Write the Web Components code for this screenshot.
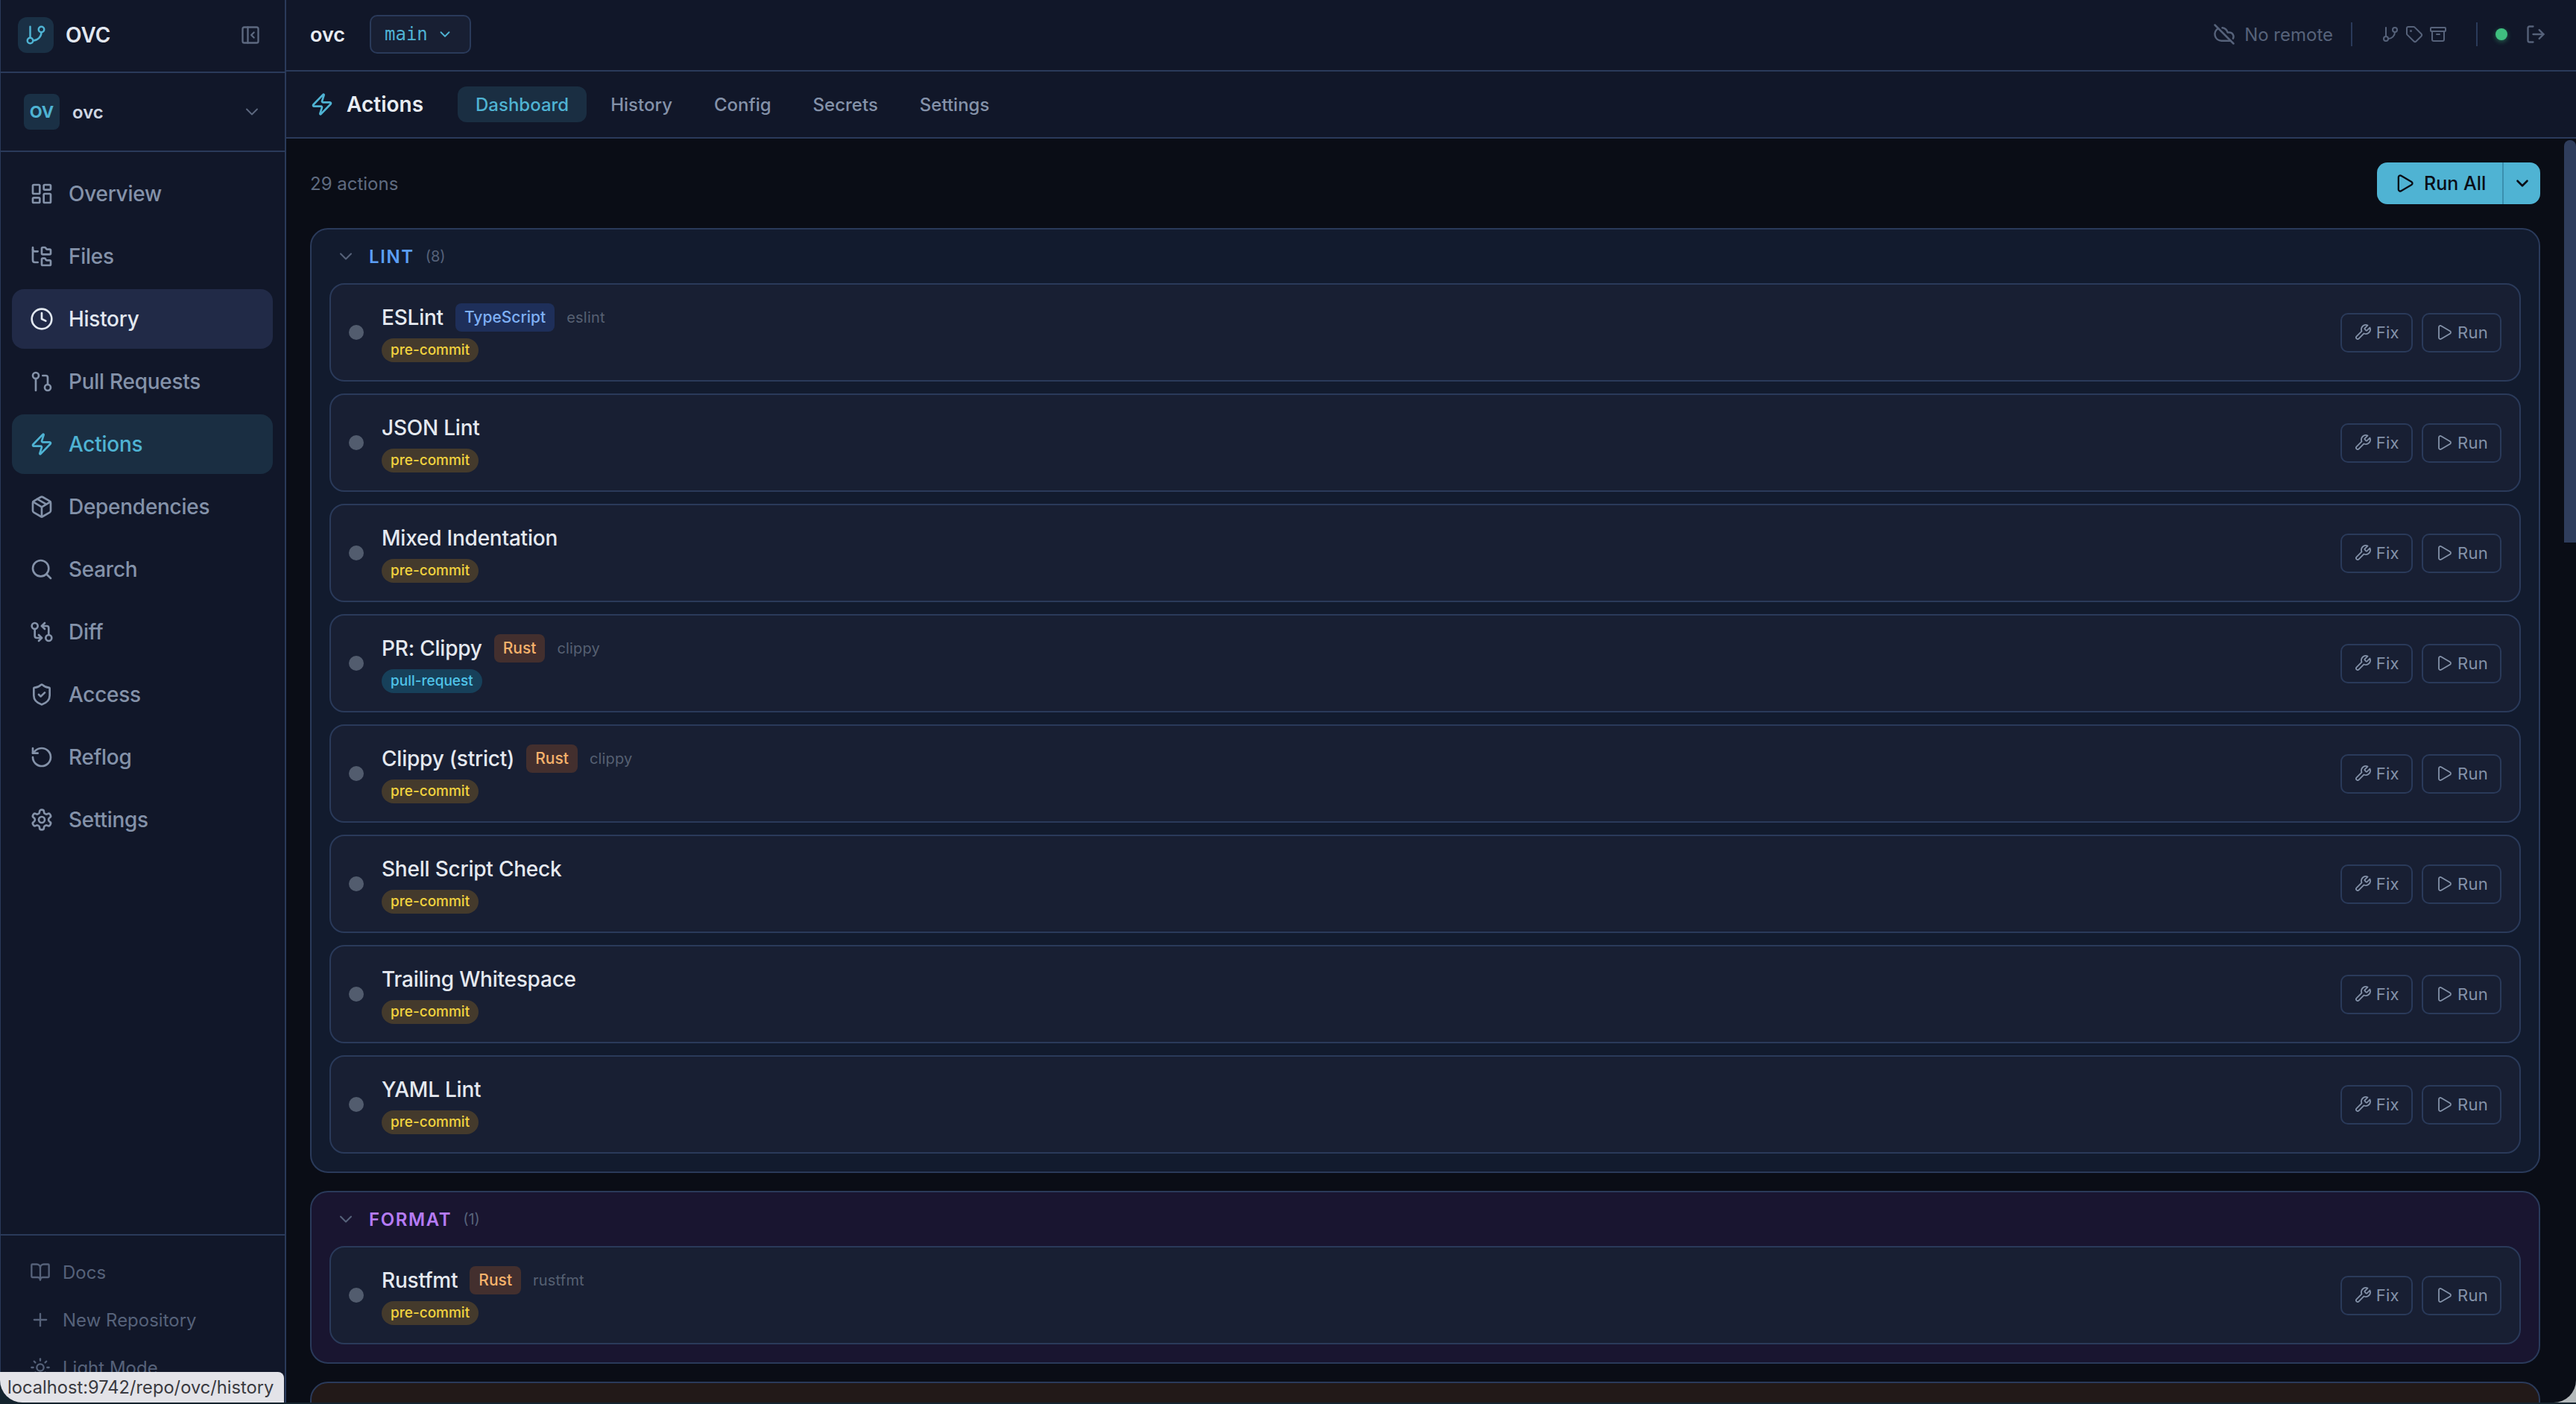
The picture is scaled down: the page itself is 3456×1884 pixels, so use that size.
<!DOCTYPE html>
<html>
<head>
<meta charset="utf-8">
<title>OVC</title>
<style>
  html, body { margin: 0; height: 100%; }
  body { background: #15242e; overflow: hidden; font-family: Inter, "Noto Sans", sans-serif; position: relative; }
  .glare { position: absolute; right: 0; bottom: 2px; width: 34px; height: 34px; background: #b4b9bb; }
</style>
</head>
<body>
<div class="glare"></div>
<ovc-app></ovc-app>

<script>
const ICONS = {
  branch: '<line x1="6" x2="6" y1="3" y2="15"/><circle cx="18" cy="6" r="3"/><circle cx="6" cy="18" r="3"/><path d="M18 9a9 9 0 0 1-9 9"/>',
  panel: '<rect x="3" y="3" width="18" height="18" rx="2"/><path d="M9 3v18"/><path d="m16 15-3-3 3-3"/>',
  chevron: '<path d="m6 9 6 6 6-6"/>',
  dashboard: '<rect x="3" y="3" width="7" height="9" rx="1"/><rect x="14" y="3" width="7" height="5" rx="1"/><rect x="14" y="12" width="7" height="9" rx="1"/><rect x="3" y="16" width="7" height="5" rx="1"/>',
  tree: '<path d="M20 10a1 1 0 0 0 1-1V6a1 1 0 0 0-1-1h-2.5a1 1 0 0 1-.8-.4l-.9-1.2A1 1 0 0 0 15 3h-2a1 1 0 0 0-1 1v5a1 1 0 0 0 1 1Z"/><path d="M20 21a1 1 0 0 0 1-1v-3a1 1 0 0 0-1-1h-2.9a1 1 0 0 1-.88-.55l-.42-.85a1 1 0 0 0-.92-.6H13a1 1 0 0 0-1 1v5a1 1 0 0 0 1 1Z"/><path d="M3 5a2 2 0 0 0 2 2h3"/><path d="M3 3v13a2 2 0 0 0 2 2h3"/>',
  clock: '<circle cx="12" cy="12" r="10"/><path d="M12 6v6l4 2"/>',
  pull: '<circle cx="18" cy="18" r="3"/><circle cx="6" cy="6" r="3"/><path d="M13 6h3a2 2 0 0 1 2 2v7"/><line x1="6" x2="6" y1="9" y2="21"/>',
  zap: '<path d="M4 14a1 1 0 0 1-.78-1.63l9.9-10.2a.5.5 0 0 1 .86.46l-1.92 6.02A1 1 0 0 0 13 10h7a1 1 0 0 1 .78 1.63l-9.9 10.2a.5.5 0 0 1-.86-.46l1.92-6.02A1 1 0 0 0 11 14z"/>',
  box: '<path d="M11 21.73a2 2 0 0 0 2 0l7-4A2 2 0 0 0 21 16V8a2 2 0 0 0-1-1.73l-7-4a2 2 0 0 0-2 0l-7 4A2 2 0 0 0 3 8v8a2 2 0 0 0 1 1.73z"/><path d="M12 22V12"/><path d="m3.3 7 7.703 4.734a2 2 0 0 0 1.994 0L20.7 7"/><path d="m7.5 4.27 9 5.15"/>',
  search: '<path d="m21 21-4.34-4.34"/><circle cx="11" cy="11" r="8"/>',
  compare: '<circle cx="5" cy="6" r="3"/><path d="M12 6h5a2 2 0 0 1 2 2v7"/><path d="m15 9-3-3 3-3"/><circle cx="19" cy="18" r="3"/><path d="M12 18H7a2 2 0 0 1-2-2V9"/><path d="m9 15 3 3-3 3"/>',
  shield: '<path d="M20 13c0 5-3.5 7.5-7.66 8.95a1 1 0 0 1-.67-.01C7.5 20.5 4 18 4 13V6a1 1 0 0 1 1-1c2 0 4.5-1.2 6.24-2.72a1.17 1.17 0 0 1 1.52 0C14.51 3.81 17 5 19 5a1 1 0 0 1 1 1z"/><path d="m9 12 2 2 4-4"/>',
  undo: '<path d="M3 12a9 9 0 1 0 9-9 9.75 9.75 0 0 0-6.74 2.74L3 8"/><path d="M3 3v5h5"/>',
  gear: '<path d="M12.22 2h-.44a2 2 0 0 0-2 2v.18a2 2 0 0 1-1 1.73l-.43.25a2 2 0 0 1-2 0l-.15-.08a2 2 0 0 0-2.73.73l-.22.38a2 2 0 0 0 .73 2.73l.15.1a2 2 0 0 1 1 1.72v.51a2 2 0 0 1-1 1.74l-.15.09a2 2 0 0 0-.73 2.73l.22.38a2 2 0 0 0 2.73.73l.15-.08a2 2 0 0 1 2 0l.43.25a2 2 0 0 1 1 1.73V20a2 2 0 0 0 2 2h.44a2 2 0 0 0 2-2v-.18a2 2 0 0 1 1-1.73l.43-.25a2 2 0 0 1 2 0l.15.08a2 2 0 0 0 2.73-.73l.22-.39a2 2 0 0 0-.73-2.73l-.15-.08a2 2 0 0 1-1-1.74v-.5a2 2 0 0 1 1-1.74l.15-.09a2 2 0 0 0 .73-2.73l-.22-.38a2 2 0 0 0-2.73-.73l-.15.08a2 2 0 0 1-2 0l-.43-.25a2 2 0 0 1-1-1.73V4a2 2 0 0 0-2-2z"/><circle cx="12" cy="12" r="3"/>',
  book: '<path d="M12 7v14"/><path d="M3 18a1 1 0 0 1-1-1V4a1 1 0 0 1 1-1h5a4 4 0 0 1 4 4 4 4 0 0 1 4-4h5a1 1 0 0 1 1 1v13a1 1 0 0 1-1 1h-6a3 3 0 0 0-3 3 3 3 0 0 0-3-3z"/>',
  plus: '<path d="M5 12h14"/><path d="M12 5v14"/>',
  sun: '<circle cx="12" cy="12" r="4"/><path d="M12 2v2"/><path d="M12 20v2"/><path d="m4.93 4.93 1.41 1.41"/><path d="m17.66 17.66 1.41 1.41"/><path d="M2 12h2"/><path d="M20 12h2"/><path d="m6.34 17.66-1.41 1.41"/><path d="m19.07 4.93-1.41 1.41"/>',
  cloudoff: '<path d="m2 2 20 20"/><path d="M5.782 5.782A7 7 0 0 0 9 19h8.5a4.5 4.5 0 0 0 1.307-.193"/><path d="M21.532 16.5A4.5 4.5 0 0 0 17.5 10h-1.79A7.008 7.008 0 0 0 10 5.07"/>',
  tag: '<path d="M12.586 2.586A2 2 0 0 0 11.172 2H4a2 2 0 0 0-2 2v7.172a2 2 0 0 0 .586 1.414l8.704 8.704a2.426 2.426 0 0 0 3.42 0l6.58-6.58a2.426 2.426 0 0 0 0-3.42z"/><circle cx="7.5" cy="7.5" r=".5" fill="currentColor"/>',
  archive: '<rect x="2" y="3" width="20" height="5" rx="1"/><path d="M4 8v11a2 2 0 0 0 2 2h12a2 2 0 0 0 2-2V8"/><path d="M10 12h4"/>',
  logout: '<path d="m16 17 5-5-5-5"/><path d="M21 12H9"/><path d="M9 21H5a2 2 0 0 1-2-2V5a2 2 0 0 1 2-2h4"/>',
  wrench: '<path d="M14.7 6.3a1 1 0 0 0 0 1.4l1.6 1.6a1 1 0 0 0 1.4 0l3.77-3.77a6 6 0 0 1-7.94 7.94l-6.91 6.91a2.12 2.12 0 0 1-3-3l6.91-6.91a6 6 0 0 1 7.94-7.94l-3.76 3.76z"/>',
  play: '<path d="M5 5a2 2 0 0 1 3.008-1.728l11.997 6.998a2 2 0 0 1 .003 3.458l-12 7A2 2 0 0 1 5 19z"/>'
}

class OvcIcon extends HTMLElement {
  connectedCallback(){
    const size = this.getAttribute('size') || 24
    const root = this.attachShadow({mode: 'open'})
    root.innerHTML = `
      <style>
      :host{ display: inline-flex; flex: none; width: ${size}px; height: ${size}px; }
      svg{ width: 100%; height: 100%; }
      </style>
      <svg viewBox="0 0 24 24" fill="none" stroke="currentColor" stroke-width="${this.getAttribute('stroke') || 2}" stroke-linecap="round" stroke-linejoin="round">${ICONS[this.getAttribute('name')]}</svg>`
  }
}

class NavItem extends HTMLElement {
  connectedCallback(){
    const root = this.attachShadow({mode: 'open'})
    root.innerHTML = `
      <style>
      :host{
        display: flex;
        align-items: center;
        gap: 20px;
        height: 80px;
        padding-left: 24px;
        border-radius: 16px;
        font-size: 28px;
        font-weight: 500;
        letter-spacing: -.28px;
        color: #8492a9;
      }
      :host([current]){ background: #212a47; color: #e2e8f0; }
      :host([active]){ background: #1a2e42; color: #4fb3d3; }
      </style>
      <ovc-icon name="${this.getAttribute('icon')}" size="32"></ovc-icon>
      <slot></slot>`
  }
}

class FootItem extends HTMLElement {
  connectedCallback(){
    const root = this.attachShadow({mode: 'open'})
    root.innerHTML = `
      <style>
      :host{
        display: flex;
        align-items: center;
        gap: 16px;
        height: 64px;
        padding-left: 24px;
        font-size: 24px;
        font-weight: 400;
        color: #56627a;
      }
      </style>
      <ovc-icon name="${this.getAttribute('icon')}" size="28"></ovc-icon>
      <slot></slot>`
  }
}

class OvcSidebar extends HTMLElement {
  constructor(){
    super()
    const root = this.attachShadow({mode: 'open'})
    root.innerHTML = `
      <style>
      :host{
        display: flex;
        flex-direction: column;
        width: 384px;
        box-sizing: border-box;
        height: 100%;
        overflow: hidden;
        background: #111729;
        border-right: 2px solid #2a3a5a;
        box-shadow: inset 1px 0 0 #2a3a5a;
      }
      .brand{
        display: flex;
        align-items: center;
        height: 98px;
        box-sizing: border-box;
        padding: 0 32px 2px 24px;
        border-bottom: 2px solid #2a3a5a;
      }
      .logo{
        display: flex;
        align-items: center;
        justify-content: center;
        width: 48px;
        height: 48px;
        border-radius: 12px;
        background: #1a3045;
        color: #4fb3d3;
      }
      .name{
        margin-left: 16px;
        flex: 1;
        font-size: 28px;
        font-weight: 600;
        color: #e2e8f0;
      }
      .collapse{ color: #5d6980; }
      .repo{
        display: flex;
        align-items: center;
        height: 106px;
        box-sizing: border-box;
        padding: 0 32px;
        border-bottom: 2px solid #2a3a5a;
      }
      .avatar{
        display: flex;
        align-items: center;
        justify-content: center;
        width: 48px;
        height: 48px;
        border-radius: 8px;
        background: #1a3045;
        color: #4fb3d3;
        font-size: 22px;
        font-weight: 700;
      }
      .repo-name{
        margin-left: 17px;
        flex: 1;
        font-size: 24px;
        font-weight: 600;
        color: #cfd6e2;
      }
      .repo ovc-icon{ color: #5d6980; margin-right: -2px; }
      nav{
        flex: 1;
        display: flex;
        flex-direction: column;
        gap: 4px;
        padding: 16px;
      }
      footer{
        height: 226px;
        box-sizing: border-box;
        padding: 17px 16px 0;
        border-top: 2px solid #2a3a5a;
      }
      </style>
      <div class="brand">
        <div class="logo"><ovc-icon name="branch" size="30"></ovc-icon></div>
        <div class="name">OVC</div>
        <ovc-icon class="collapse" name="panel" size="28"></ovc-icon>
      </div>
      <div class="repo">
        <div class="avatar">OV</div>
        <div class="repo-name">ovc</div>
        <ovc-icon name="chevron" size="28" stroke="1.6"></ovc-icon>
      </div>
      <nav>
        <nav-item icon="dashboard">Overview</nav-item>
        <nav-item icon="tree">Files</nav-item>
        <nav-item icon="clock" current>History</nav-item>
        <nav-item icon="pull">Pull Requests</nav-item>
        <nav-item icon="zap" active>Actions</nav-item>
        <nav-item icon="box">Dependencies</nav-item>
        <nav-item icon="search">Search</nav-item>
        <nav-item icon="compare">Diff</nav-item>
        <nav-item icon="shield">Access</nav-item>
        <nav-item icon="undo">Reflog</nav-item>
        <nav-item icon="gear">Settings</nav-item>
      </nav>
      <footer>
        <foot-item icon="book">Docs</foot-item>
        <foot-item icon="plus">New Repository</foot-item>
        <foot-item icon="sun">Light Mode</foot-item>
      </footer>`
  }
}

class TopBar extends HTMLElement {
  constructor(){
    super()
    const root = this.attachShadow({mode: 'open'})
    root.innerHTML = `
      <style>
      :host{
        display: flex;
        align-items: center;
        flex: none;
        height: 96px;
        box-sizing: border-box;
        padding: 0 40px 2px 32px;
        background: #111729;
        border-bottom: 2px solid #2a3a5a;
      }
      .repo{ font-size: 27px; font-weight: 600; color: #e8ecf2; }
      .branch{
        display: flex;
        align-items: center;
        gap: 12px;
        height: 52px;
        box-sizing: border-box;
        margin-left: 33px;
        padding: 0 22px 0 18px;
        background: #181f33;
        border: 2px solid #2a3a5a;
        border-radius: 10px;
        font-family: "DejaVu Sans Mono", monospace;
        font-size: 24px;
        color: #4fb3d3;
      }
      .right{
        margin-left: auto;
        display: flex;
        align-items: center;
        color: #56627a;
      }
      .remote{ margin-left: 12px; font-size: 24px; }
      .sep{ width: 2px; height: 32px; background: #2a3a5a; }
      .icons{ display: flex; gap: 8px; margin: 0 39px; }
      .dot{
        width: 16px;
        height: 16px;
        border-radius: 50%;
        background: #3fbf7f;
        box-shadow: 0 2px 6px rgba(63,191,127,.45);
        margin: 0 24px;
      }
      </style>
      <span class="repo">ovc</span>
      <div class="branch">main <ovc-icon name="chevron" size="22"></ovc-icon></div>
      <div class="right">
        <ovc-icon name="cloudoff" size="30"></ovc-icon>
        <span class="remote">No remote</span>
        <span class="sep" style="margin-left:24px"></span>
        <div class="icons">
          <ovc-icon name="branch" size="24"></ovc-icon>
          <ovc-icon name="tag" size="24"></ovc-icon>
          <ovc-icon name="archive" size="24"></ovc-icon>
        </div>
        <span class="sep"></span>
        <span class="dot"></span>
        <ovc-icon name="logout" size="28"></ovc-icon>
      </div>`
  }
}

class SubBar extends HTMLElement {
  constructor(){
    super()
    const root = this.attachShadow({mode: 'open'})
    root.innerHTML = `
      <style>
      :host{
        display: flex;
        align-items: center;
        flex: none;
        height: 90px;
        box-sizing: border-box;
        padding: 0 32px 0 32px;
        background: #111729;
        border-bottom: 2px solid #2a3a5a;
      }
      ovc-icon{ color: #4fb3d3; }
      .title{ margin: 0 46px 0 17px; font-size: 28px; font-weight: 600; color: #e8ecf2; }
      .tabs{ display: flex; gap: 8px; }
      .tab{
        display: flex;
        align-items: center;
        height: 48px;
        padding: 0 24px;
        border-radius: 12px;
        font-size: 24px;
        font-weight: 500;
        color: #8492a9;
      }
      .tab.on{ background: #1a2e42; color: #4fb3d3; }
      </style>
      <ovc-icon name="zap" size="32"></ovc-icon>
      <span class="title">Actions</span>
      <div class="tabs">
        <span class="tab on">Dashboard</span>
        <span class="tab">History</span>
        <span class="tab">Config</span>
        <span class="tab">Secrets</span>
        <span class="tab">Settings</span>
      </div>`
  }
}

class RunAll extends HTMLElement {
  constructor(){
    super()
    const root = this.attachShadow({mode: 'open'})
    root.innerHTML = `
      <style>
      :host{
        display: flex;
        height: 56px;
        border-radius: 14px;
        background: #4fb3d3;
        color: #0a0d16;
        font-size: 25px;
        font-weight: 500;
      }
      .main{
        display: flex;
        align-items: center;
        gap: 12px;
        width: 168px;
        box-sizing: border-box;
        padding-left: 23px;
      }
      .more{
        display: flex;
        align-items: center;
        justify-content: center;
        width: 51px;
        box-sizing: border-box;
        border-left: 2px solid #3a8fae;
      }
      </style>
      <div class="main"><ovc-icon name="play" size="28"></ovc-icon>Run All</div>
      <div class="more"><ovc-icon name="chevron" size="26" stroke="2.4"></ovc-icon></div>`
  }
}

class ActionGroup extends HTMLElement {
  connectedCallback(){
    const root = this.attachShadow({mode: 'open'})
    root.innerHTML = `
      <style>
      :host{
        display: block;
        flex: none;
        box-sizing: border-box;
        border: 2px solid #2a3a5a;
        border-radius: 24px;
        background: var(--tint);
      }
      .head{
        display: flex;
        align-items: center;
        height: 72px;
        padding: 0 0 0 32px;
        color: #56627a;
      }
      .label{
        margin-left: 17px;
        font-size: 24px;
        font-weight: 600;
        letter-spacing: 1.6px;
        color: var(--accent);
      }
      .count{ margin-left: 15px; font-size: 20px; }
      .list{
        display: flex;
        flex-direction: column;
        gap: 16px;
        padding: 0 24px 24px;
      }
      </style>
      <div class="head">
        <ovc-icon name="chevron" size="28" stroke="1.8"></ovc-icon>
        <span class="label">${this.getAttribute('label')}</span>
        <span class="count">(${this.getAttribute('count')})</span>
      </div>
      <div class="list"><slot></slot></div>`
  }
}

class ActionCard extends HTMLElement {
  connectedCallback(){
    const lang = this.getAttribute('lang-name')
    const tool = this.getAttribute('tool')
    const trigger = this.getAttribute('trigger') || 'pre-commit'
    const root = this.attachShadow({mode: 'open'})
    root.innerHTML = `
      <style>
      :host{
        display: flex;
        align-items: center;
        height: 132px;
        box-sizing: border-box;
        padding: 0 24px;
        background: #181f33;
        border: 2px solid #2a3a5a;
        border-radius: 20px;
      }
      .dot{ width: 20px; height: 20px; border-radius: 50%; background: #525c6e; flex: none; }
      .info{ margin-left: 24px; flex: 1; }
      .row{ display: flex; align-items: center; gap: 16px; height: 38px; margin-bottom: 9px; }
      .name{ font-size: 28px; font-weight: 500; letter-spacing: -.22px; color: #e5e9f0; }
      .lang{
        display: flex;
        align-items: center;
        height: 38px;
        padding: 0 12px;
        border-radius: 8px;
        font-size: 21px;
        font-weight: 500;
      }
      .lang.TypeScript{ background: #1e2f5a; color: #7fb0f5; }
      .lang.Rust{ background: #432f2e; color: #f6b26b; }
      .tool{ font-size: 20px; letter-spacing: .2px; color: #566072; }
      .trigger{
        display: inline-flex;
        align-items: center;
        height: 32px;
        padding: 0 12px;
        border-radius: 16px;
        font-size: 19px;
        font-weight: 500;
        vertical-align: top;
      }
      .trigger.pre-commit{ background: #443a2c; color: #f2d33f; }
      .trigger.pull-request{ background: #17405a; color: #4fc3e8; }
      .btns{ display: flex; gap: 12px; }
      .btn{
        display: flex;
        align-items: center;
        gap: 6px;
        height: 53px;
        box-sizing: border-box;
        padding: 0 16px;
        border: 2px solid #2a3a5a;
        border-radius: 10px;
        font-size: 22px;
        letter-spacing: .3px;
        color: #8492a9;
      }
      </style>
      <span class="dot"></span>
      <div class="info">
        <div class="row">
          <span class="name"><slot></slot></span>
          ${lang ? `<span class="lang ${lang}">${lang}</span>` : ''}
          ${tool ? `<span class="tool">${tool}</span>` : ''}
        </div>
        <span class="trigger ${trigger}">${trigger}</span>
      </div>
      <div class="btns">
        <div class="btn"><ovc-icon name="wrench" size="24" stroke="1.8"></ovc-icon>Fix</div>
        <div class="btn"><ovc-icon name="play" size="24" stroke="1.8"></ovc-icon>Run</div>
      </div>`
  }
}

class ActionsPage extends HTMLElement {
  constructor(){
    super()
    const root = this.attachShadow({mode: 'open'})
    root.innerHTML = `
      <style>
      :host{
        display: block;
        flex: 1;
        min-height: 0;
        position: relative;
        overflow: hidden;
        background: #0a0d16;
      }
      .scroll{
        display: flex;
        flex-direction: column;
        gap: 24px;
        height: 100%;
        box-sizing: border-box;
        padding: 32px 48px 0 32px;
        overflow: hidden;
      }
      .bar{
        display: flex;
        align-items: center;
        justify-content: space-between;
        margin-bottom: 8px;
        font-size: 24px;
        color: #5f6b80;
      }
      .thumb{
        position: absolute;
        top: 2px;
        right: 0;
        width: 16px;
        height: 540px;
        border-radius: 8px 8px 0 0;
        background: #2f3d5c;
      }
      </style>
      <div class="scroll">
        <div class="bar"><span>29 actions</span><run-all></run-all></div>
        <action-group label="LINT" count="8" style="--tint:#121b2e;--accent:#5b9ef5">
          <action-card lang-name="TypeScript" tool="eslint">ESLint</action-card>
          <action-card>JSON Lint</action-card>
          <action-card>Mixed Indentation</action-card>
          <action-card lang-name="Rust" tool="clippy" trigger="pull-request">PR: Clippy</action-card>
          <action-card lang-name="Rust" tool="clippy">Clippy (strict)</action-card>
          <action-card>Shell Script Check</action-card>
          <action-card>Trailing Whitespace</action-card>
          <action-card>YAML Lint</action-card>
        </action-group>
        <action-group label="FORMAT" count="1" style="--tint:#191530;--accent:#b57bf5">
          <action-card lang-name="Rust" tool="rustfmt">Rustfmt</action-card>
        </action-group>
        <div style="flex:none;height:200px;box-sizing:border-box;border:2px solid #2a3a5a;border-radius:24px;background:#221918"></div>
      </div>
      <div class="thumb"></div>`
  }
}

class OvcApp extends HTMLElement {
  constructor(){
    super()
    const root = this.attachShadow({mode: 'open'})
    root.innerHTML = `
      <style>
      :host{
        display: flex;
        position: relative;
        height: 1882px;
        overflow: hidden;
        border-radius: 0 0 30px 30px;
        color: #e2e8f0;
        font-family: Inter, "Noto Sans", sans-serif;
      }
      .main{ flex: 1; min-width: 0; display: flex; flex-direction: column; }
      .status{
        position: absolute;
        left: 0;
        bottom: 0;
        display: flex;
        align-items: center;
        width: 381px;
        height: 41px;
        box-sizing: border-box;
        padding-left: 10px;
        background: #e3e3e8;
        border-radius: 0 8px 0 0;
        font-size: 23.7px;
        white-space: nowrap;
        color: #3a3a40;
      }
      </style>
      <ovc-sidebar></ovc-sidebar>
      <div class="main">
        <top-bar></top-bar>
        <sub-bar></sub-bar>
        <actions-page></actions-page>
      </div>
      <div class="status">localhost:9742/repo/ovc/history</div>`
  }
}

window.customElements.define('ovc-icon', OvcIcon)
window.customElements.define('nav-item', NavItem)
window.customElements.define('foot-item', FootItem)
window.customElements.define('ovc-sidebar', OvcSidebar)
window.customElements.define('top-bar', TopBar)
window.customElements.define('sub-bar', SubBar)
window.customElements.define('run-all', RunAll)
window.customElements.define('action-group', ActionGroup)
window.customElements.define('action-card', ActionCard)
window.customElements.define('actions-page', ActionsPage)
window.customElements.define('ovc-app', OvcApp)
</script>
</body>
</html>
